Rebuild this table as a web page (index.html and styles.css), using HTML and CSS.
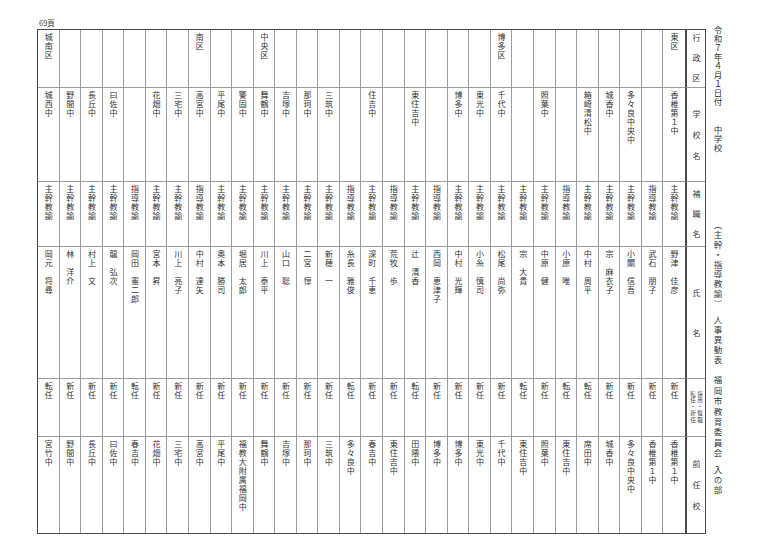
FILE: index.html
```html
<!DOCTYPE html>
<html lang="ja">
<head>
<meta charset="utf-8">
<title>人事異動表</title>
<link rel="stylesheet" href="styles.css">
</head>
<body>
<div class="page">
  <div class="sheet">
    <div class="pagenum">69頁</div>
    <div class="table">
      <div class="col"><div class="c"><span class="v">城南区</span></div><div class="c"><span class="v">城西中</span></div><div class="c"><span class="v">主幹教諭</span></div><div class="c"><span class="v">岡元　将尋</span></div><div class="c"><span class="v">転任</span></div><div class="c"><span class="v">宮竹中</span></div></div>
      <div class="col"><div class="c"></div><div class="c"><span class="v">野間中</span></div><div class="c"><span class="v">主幹教諭</span></div><div class="c"><span class="v">林　洋介</span></div><div class="c"><span class="v">新任</span></div><div class="c"><span class="v">野間中</span></div></div>
      <div class="col"><div class="c"></div><div class="c"><span class="v">長丘中</span></div><div class="c"><span class="v">主幹教諭</span></div><div class="c"><span class="v">村上　文</span></div><div class="c"><span class="v">新任</span></div><div class="c"><span class="v">長丘中</span></div></div>
      <div class="col"><div class="c"></div><div class="c"><span class="v">曰佐中</span></div><div class="c"><span class="v">主幹教諭</span></div><div class="c"><span class="v">龍　弘次</span></div><div class="c"><span class="v">新任</span></div><div class="c"><span class="v">曰佐中</span></div></div>
      <div class="col"><div class="c"></div><div class="c"></div><div class="c"><span class="v">指導教諭</span></div><div class="c"><span class="v">岡田　憲二郎</span></div><div class="c"><span class="v">転任</span></div><div class="c"><span class="v">春吉中</span></div></div>
      <div class="col"><div class="c"></div><div class="c"><span class="v">花畑中</span></div><div class="c"><span class="v">主幹教諭</span></div><div class="c"><span class="v">宮本　昇</span></div><div class="c"><span class="v">新任</span></div><div class="c"><span class="v">花畑中</span></div></div>
      <div class="col"><div class="c"></div><div class="c"><span class="v">三宅中</span></div><div class="c"><span class="v">主幹教諭</span></div><div class="c"><span class="v">川上　亮子</span></div><div class="c"><span class="v">新任</span></div><div class="c"><span class="v">三宅中</span></div></div>
      <div class="col"><div class="c"><span class="v">南区</span></div><div class="c"><span class="v">高宮中</span></div><div class="c"><span class="v">指導教諭</span></div><div class="c"><span class="v">中村　達矢</span></div><div class="c"><span class="v">新任</span></div><div class="c"><span class="v">高宮中</span></div></div>
      <div class="col"><div class="c"></div><div class="c"><span class="v">平尾中</span></div><div class="c"><span class="v">主幹教諭</span></div><div class="c"><span class="v">奥本　勝司</span></div><div class="c"><span class="v">新任</span></div><div class="c"><span class="v">平尾中</span></div></div>
      <div class="col"><div class="c"></div><div class="c"><span class="v">警固中</span></div><div class="c"><span class="v">主幹教諭</span></div><div class="c"><span class="v">堀居　太郎</span></div><div class="c"><span class="v">新任</span></div><div class="c"><span class="v">福教大附属福岡中</span></div></div>
      <div class="col"><div class="c"><span class="v">中央区</span></div><div class="c"><span class="v">舞鶴中</span></div><div class="c"><span class="v">主幹教諭</span></div><div class="c"><span class="v">川上　泰平</span></div><div class="c"><span class="v">新任</span></div><div class="c"><span class="v">舞鶴中</span></div></div>
      <div class="col"><div class="c"></div><div class="c"><span class="v">吉塚中</span></div><div class="c"><span class="v">主幹教諭</span></div><div class="c"><span class="v">山口　聡</span></div><div class="c"><span class="v">新任</span></div><div class="c"><span class="v">吉塚中</span></div></div>
      <div class="col"><div class="c"></div><div class="c"><span class="v">那珂中</span></div><div class="c"><span class="v">主幹教諭</span></div><div class="c"><span class="v">二宮　惇</span></div><div class="c"><span class="v">新任</span></div><div class="c"><span class="v">那珂中</span></div></div>
      <div class="col"><div class="c"></div><div class="c"><span class="v">三筑中</span></div><div class="c"><span class="v">主幹教諭</span></div><div class="c"><span class="v">新穂　一</span></div><div class="c"><span class="v">新任</span></div><div class="c"><span class="v">三筑中</span></div></div>
      <div class="col"><div class="c"></div><div class="c"></div><div class="c"><span class="v">指導教諭</span></div><div class="c"><span class="v">糸長　雅俊</span></div><div class="c"><span class="v">転任</span></div><div class="c"><span class="v">多々良中</span></div></div>
      <div class="col"><div class="c"></div><div class="c"><span class="v">住吉中</span></div><div class="c"><span class="v">主幹教諭</span></div><div class="c"><span class="v">深町　千恵</span></div><div class="c"><span class="v">新任</span></div><div class="c"><span class="v">春吉中</span></div></div>
      <div class="col"><div class="c"></div><div class="c"></div><div class="c"><span class="v">指導教諭</span></div><div class="c"><span class="v">荒牧　歩</span></div><div class="c"><span class="v">新任</span></div><div class="c"><span class="v">東住吉中</span></div></div>
      <div class="col"><div class="c"></div><div class="c"><span class="v">東住吉中</span></div><div class="c"><span class="v">主幹教諭</span></div><div class="c"><span class="v">辻　清香</span></div><div class="c"><span class="v">転任</span></div><div class="c"><span class="v">田隈中</span></div></div>
      <div class="col"><div class="c"></div><div class="c"></div><div class="c"><span class="v">指導教諭</span></div><div class="c"><span class="v">西岡　恵津子</span></div><div class="c"><span class="v">新任</span></div><div class="c"><span class="v">博多中</span></div></div>
      <div class="col"><div class="c"></div><div class="c"><span class="v">博多中</span></div><div class="c"><span class="v">主幹教諭</span></div><div class="c"><span class="v">中村　光輝</span></div><div class="c"><span class="v">新任</span></div><div class="c"><span class="v">博多中</span></div></div>
      <div class="col"><div class="c"></div><div class="c"><span class="v">東光中</span></div><div class="c"><span class="v">主幹教諭</span></div><div class="c"><span class="v">小糸　慎司</span></div><div class="c"><span class="v">新任</span></div><div class="c"><span class="v">東光中</span></div></div>
      <div class="col"><div class="c"><span class="v">博多区</span></div><div class="c"><span class="v">千代中</span></div><div class="c"><span class="v">主幹教諭</span></div><div class="c"><span class="v">松尾　尚弥</span></div><div class="c"><span class="v">新任</span></div><div class="c"><span class="v">千代中</span></div></div>
      <div class="col"><div class="c"></div><div class="c"></div><div class="c"><span class="v">主幹教諭</span></div><div class="c"><span class="v">宗　大貴</span></div><div class="c"><span class="v">転任</span></div><div class="c"><span class="v">東住吉中</span></div></div>
      <div class="col"><div class="c"></div><div class="c"><span class="v">照葉中</span></div><div class="c"><span class="v">主幹教諭</span></div><div class="c"><span class="v">中原　健</span></div><div class="c"><span class="v">新任</span></div><div class="c"><span class="v">照葉中</span></div></div>
      <div class="col"><div class="c"></div><div class="c"></div><div class="c"><span class="v">指導教諭</span></div><div class="c"><span class="v">小原　唯</span></div><div class="c"><span class="v">転任</span></div><div class="c"><span class="v">東住吉中</span></div></div>
      <div class="col"><div class="c"></div><div class="c"><span class="v">箱崎清松中</span></div><div class="c"><span class="v">主幹教諭</span></div><div class="c"><span class="v">中村　周平</span></div><div class="c"><span class="v">転任</span></div><div class="c"><span class="v">席田中</span></div></div>
      <div class="col"><div class="c"></div><div class="c"><span class="v">城香中</span></div><div class="c"><span class="v">主幹教諭</span></div><div class="c"><span class="v">宗　麻衣子</span></div><div class="c"><span class="v">新任</span></div><div class="c"><span class="v">城香中</span></div></div>
      <div class="col"><div class="c"></div><div class="c"><span class="v">多々良中央中</span></div><div class="c"><span class="v">主幹教諭</span></div><div class="c"><span class="v">小關　信吾</span></div><div class="c"><span class="v">新任</span></div><div class="c"><span class="v">多々良中央中</span></div></div>
      <div class="col"><div class="c"></div><div class="c"></div><div class="c"><span class="v">指導教諭</span></div><div class="c"><span class="v">武石　朋子</span></div><div class="c"><span class="v">新任</span></div><div class="c"><span class="v">香椎第１中</span></div></div>
      <div class="col"><div class="c"><span class="v">東区</span></div><div class="c"><span class="v">香椎第１中</span></div><div class="c"><span class="v">主幹教諭</span></div><div class="c"><span class="v">野津　佳彦</span></div><div class="c"><span class="v">新任</span></div><div class="c"><span class="v">香椎第１中</span></div></div>
      <div class="col hcol">
        <div class="c h"><span class="v jt len48">行政区</span></div>
        <div class="c h"><span class="v jt len50">学校名</span></div>
        <div class="c h"><span class="v jt len48">補職名</span></div>
        <div class="c h"><span class="v jt len48">氏名</span></div>
        <div class="c h"><span class="v small">採用・復職<br>転任・新任</span></div>
        <div class="c h"><span class="v jt len50">前任校</span></div>
      </div>
    </div>
  </div>
  <div class="title">
    <span class="seg tight">令和７年４月１日付</span>
    <span class="seg tight gap2">中学校</span>
    <span class="seg gap3">（主幹・指導教諭）</span>
    <span class="seg wide gap4">人事異動表</span>
    <span class="seg wider gap5">福岡市教育委員会</span>
    <span class="seg wide gap6">入の部</span>
  </div>
</div>
</body>
</html>
```

FILE: styles.css
```css
* { box-sizing: border-box; }

body {
  margin: 0;
  background: #ffffff;
  color: #333333;
  font-family: "Noto Sans CJK JP", sans-serif;
}

.page {
  display: flex;
  align-items: flex-start;
  padding: 18px 0 0 37px;
}

.sheet {
  display: flex;
  flex-direction: column;
}

.pagenum {
  height: 10.5px;
  font-size: 7.5px;
  line-height: 10px;
  padding-left: 2px;
  color: #444444;
}

.table {
  display: grid;
  grid-template-columns: repeat(30, 21.57px) 20px;
  grid-template-rows: 58.5px 94px 65px 132px 58px 95.5px;
  grid-auto-flow: column;
  border: 1.5px solid #4a4a4a;
}

.col { display: contents; }

.c {
  display: flex;
  justify-content: center;
  align-items: flex-start;
  padding-top: 3px;
  font-size: 8px;
  border-right: 1px solid #9c9c9c;
  border-bottom: 1px solid #9c9c9c;
  overflow: hidden;
}

.col .c:last-child { border-bottom: none; }

.col:nth-last-child(2) .c { border-right: none; }

.v {
  writing-mode: vertical-rl;
  text-orientation: upright;
  letter-spacing: 1px;
  line-height: 1;
  white-space: nowrap;
}

.c.h {
  align-items: center;
  padding-top: 0;
  border-right: none;
  border-left: 2px solid #4a4a4a;
  color: #3c3c3c;
}

.jt {
  display: block;
  letter-spacing: 0;
  text-align: justify;
  text-align-last: justify;
  text-justify: inter-character;
}

.len48 { height: 48px; }
.len50 { height: 50px; }

.small {
  font-size: 5.5px;
  letter-spacing: 1px;
  line-height: 7px;
}

.title {
  display: flex;
  flex-direction: column;
  margin-left: 7.5px;
  padding-top: 8px;
  font-size: 8.5px;
}

.seg {
  writing-mode: vertical-rl;
  text-orientation: upright;
  line-height: 1;
  letter-spacing: 1.3px;
  white-space: nowrap;
}

.seg.tight { letter-spacing: 0.5px; }
.seg.wide { letter-spacing: 1.5px; }
.seg.wider { letter-spacing: 1.9px; }

.gap2 { margin-top: 19px; }
.gap3 { margin-top: 68px; }
.gap4 { margin-top: 6.8px; }
.gap5 { margin-top: 10px; }
.gap6 { margin-top: 6.8px; }
```
